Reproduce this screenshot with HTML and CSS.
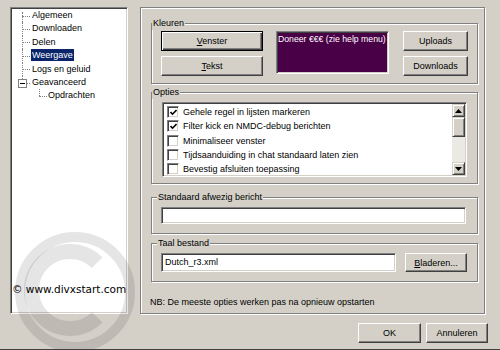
FILE: index.html
```html
<!DOCTYPE html>
<html>
<head>
    <title>Instellingen - Weergave</title>
    <link rel="stylesheet" href="styles.css">
</head>
<body>
<div class="dialog">
    <div class="main">
        <div class="tree">
            <ul>
                <li class="node first"><span class="lbl">Algemeen</span></li>
                <li class="node"><span class="lbl">Downloaden</span></li>
                <li class="node"><span class="lbl">Delen</span></li>
                <li class="node selected"><span class="lbl">Weergave</span></li>
                <li class="node"><span class="lbl">Logs en geluid</span></li>
                <li class="node parent"><span class="toggle"></span><span class="lbl">Geavanceerd</span></li>
                <li class="node child"><span class="lbl">Opdrachten</span></li>
            </ul>
        </div>

        <div class="page">
            <fieldset class="group kleuren">
                <legend>Kleuren</legend>
                <div class="body">
                    <div class="col col-a">
                        <button class="btn default"><u>V</u>enster</button>
                        <button class="btn"><u>T</u>ekst</button>
                    </div>
                    <div class="preview">Doneer €€€ (zie help menu)</div>
                    <div class="col col-b">
                        <button class="btn">Uploads</button>
                        <button class="btn">Downloads</button>
                    </div>
                </div>
            </fieldset>

            <fieldset class="group opties">
                <legend>Opties</legend>
                <div class="body">
                    <div class="list">
                        <ul class="items">
                            <li><span class="cb"><svg width="7" height="7" viewBox="0 0 7 7"><polyline points="0.5,3 2.5,5.2 6.5,1" fill="none" stroke="#000" stroke-width="1.6"/></svg></span>Gehele regel in lijsten markeren</li>
                            <li><span class="cb"><svg width="7" height="7" viewBox="0 0 7 7"><polyline points="0.5,3 2.5,5.2 6.5,1" fill="none" stroke="#000" stroke-width="1.6"/></svg></span>Filter kick en NMDC-debug berichten</li>
                            <li><span class="cb"></span>Minimaliseer venster</li>
                            <li><span class="cb"></span>Tijdsaanduiding in chat standaard laten zien</li>
                            <li><span class="cb"></span>Bevestig afsluiten toepassing</li>
                        </ul>
                        <div class="scrollbar">
                            <div class="sb-btn"><svg width="7" height="4" viewBox="0 0 7 4"><polygon points="3.5,0 7,4 0,4" fill="#000"/></svg></div>
                            <div class="sb-btn thumb"></div>
                            <div class="track"></div>
                            <div class="sb-btn"><svg width="7" height="4" viewBox="0 0 7 4"><polygon points="0,0 7,0 3.5,4" fill="#000"/></svg></div>
                        </div>
                    </div>
                </div>
            </fieldset>

            <fieldset class="group standaard">
                <legend>Standaard afwezig bericht</legend>
                <div class="body">
                    <div class="field wide"></div>
                </div>
            </fieldset>

            <fieldset class="group taal">
                <legend>Taal bestand</legend>
                <div class="body">
                    <div class="field file">Dutch_r3.xml</div>
                    <button class="btn browse"><u>B</u>laderen...</button>
                </div>
            </fieldset>

            <p class="note">NB: De meeste opties werken pas na opnieuw opstarten</p>
        </div>
    </div>

    <div class="footer">
        <button class="btn ok">OK</button>
        <button class="btn cancel">Annuleren</button>
    </div>

    <!-- watermark over the tree corner -->
    <svg class="watermark" width="122" height="122" viewBox="0 0 122 122">
        <circle cx="61" cy="61" r="55" fill="none" stroke="rgba(0,0,0,0.1)" stroke-width="10"/>
        <path d="M83.2 31.8 A38.5 38.5 0 1 0 83.2 86.2" fill="none" stroke="rgba(0,0,0,0.1)" stroke-width="15"/>
    </svg>
    <div class="wm-text">© www.divxstart.com</div>
</div>
</body>
</html>
```

FILE: styles.css
```css
body {
    margin: 0;
    background: #d4d0c8;
    color: #000;
    font: 9px "Liberation Sans", Arial, sans-serif;
}

.dialog {
    position: relative;
    width: 500px;
    height: 350px;
    box-sizing: border-box;
    padding: 7px 0 0 10px;
    border-bottom: 1px solid #404040;
    overflow: hidden;
}

.main {
    display: flex;
    gap: 12px;
}

/* tree on the left */
.tree {
    width: 118px;
    height: 307px;
    box-sizing: border-box;
    background: #fff;
    border: 1px solid;
    border-color: #808080 #fff #fff #808080;
    box-shadow: inset 1px 1px #404040, inset -1px -1px #d4d0c8;
}

.tree ul {
    list-style: none;
    margin: 0;
    padding: 1px 0 0 1px;
}

.node {
    position: relative;
    height: 13.4px;
    line-height: 13.4px;
    padding-left: 19px;
    white-space: nowrap;
}

.node::before {
    content: '';
    position: absolute;
    left: 10px;
    top: 50%;
    width: 8px;
    border-top: 1px dotted #808080;
}

.node::after {
    content: '';
    position: absolute;
    left: 10px;
    top: 0;
    bottom: 0;
    border-left: 1px dotted #808080;
}

.node.first::after {
    top: 3px;
}

.node.parent::after {
    bottom: 50%;
}

.node.parent::before {
    left: 15px;
    width: 3px;
}

.node.child {
    padding-left: 35px;
}

.node.child::before {
    left: 27px;
}

.node.child::after {
    left: 27px;
    bottom: 50%;
}

.lbl {
    display: inline-block;
    padding: 0 1px;
    line-height: 12px;
}

.node.selected .lbl {
    background: #0a246a;
    color: #fff;
}

.toggle {
    position: absolute;
    left: 6px;
    top: 50%;
    margin-top: -4px;
    width: 9px;
    height: 9px;
    box-sizing: border-box;
    border: 1px solid #808080;
    background: linear-gradient(#000, #000) center / 5px 1px no-repeat, #fff;
    z-index: 1;
}

/* property page */
.page {
    width: 345px;
    height: 307px;
    box-sizing: border-box;
    border: 1px solid #808080;
    box-shadow: inset 1px 1px #fff, 1px 1px #fff;
    padding: 8.5px 6px 0 10px;
}

.group {
    margin: 0;
    padding: 0;
    min-width: 0;
    border: 1px solid #808080;
    box-shadow: inset 1px 1px #fff, 1px 1px #fff;
}

.group legend {
    padding: 0 1px;
    line-height: 13px;
    background: #d4d0c8;
}

.standaard legend,
.taal legend {
    margin-left: 5px;
}

.opties {
    margin-top: 1.5px;
}

.standaard {
    margin-top: 6.5px;
}

.taal {
    margin-top: 2.5px;
}

.kleuren .body {
    display: flex;
    gap: 13px;
    padding: 1.5px 9px 7px 9px;
}

.col {
    display: flex;
    flex-direction: column;
    gap: 5px;
}

.col-a {
    width: 102px;
}

.col-b {
    width: 65px;
}

.preview {
    width: 113px;
    height: 43px;
    margin-right: 1px;
    box-sizing: border-box;
    padding: 2px 1px;
    font-size: 8.7px;
    background: #4a0046;
    color: #fff;
    white-space: nowrap;
    overflow: hidden;
    border: 1px solid;
    border-color: #808080 #fff #fff #808080;
    box-shadow: inset 1px 1px #404040, inset -1px -1px #d4d0c8;
}

.btn {
    height: 20px;
    box-sizing: border-box;
    padding: 0;
    font: 9px "Liberation Sans", Arial, sans-serif;
    color: #000;
    background: #d4d0c8;
    border: 1px solid;
    border-color: #fff #404040 #404040 #fff;
    box-shadow: inset -1px -1px #808080;
}

.btn.default {
    border: 1px solid #000;
    box-shadow: inset 1px 1px #fff, inset -1px -1px #404040, inset -2px -2px #808080;
}

/* checkbox list */
.opties .body {
    padding: 3.5px 10px 6px 10px;
}

.list {
    display: flex;
    width: 305px;
    height: 75px;
    box-sizing: border-box;
    padding: 1px;
    background: #fff;
    border: 1px solid;
    border-color: #808080 #fff #fff #808080;
    box-shadow: inset 1px 1px #404040, inset -1px -1px #d4d0c8;
}

.items {
    flex: 1;
    list-style: none;
    margin: 0;
    padding: 1px 0 0 0;
    overflow: hidden;
}

.items li {
    display: flex;
    align-items: center;
    height: 14.25px;
    padding-left: 3px;
    white-space: nowrap;
}

.cb {
    flex: none;
    display: flex;
    align-items: center;
    justify-content: center;
    width: 12px;
    height: 12px;
    box-sizing: border-box;
    margin-right: 4px;
    background: #fff;
    border: 1px solid;
    border-color: #808080 #fff #fff #808080;
    box-shadow: inset 1px 1px #404040, inset -1px -1px #d4d0c8;
}

.scrollbar {
    display: flex;
    flex-direction: column;
    width: 13px;
}

.sb-btn {
    display: flex;
    align-items: center;
    justify-content: center;
    height: 13px;
    box-sizing: border-box;
    background: #d4d0c8;
    border: 1px solid;
    border-color: #d4d0c8 #404040 #404040 #d4d0c8;
    box-shadow: inset 1px 1px #fff, inset -1px -1px #808080;
}

.sb-btn.thumb {
    height: 20px;
}

.track {
    flex: 1;
    background: #ebe9e4;
}

/* text fields */
.field {
    box-sizing: border-box;
    padding: 2px 3px;
    background: #fff;
    white-space: nowrap;
    border: 1px solid;
    border-color: #808080 #fff #fff #808080;
    box-shadow: inset 1px 1px #404040, inset -1px -1px #d4d0c8;
}

.standaard .body {
    padding: 3.5px 11px 9px 9px;
}

.field.wide {
    width: 305px;
    height: 17px;
}

.taal .body {
    display: flex;
    gap: 9px;
    padding: 3.5px 10px 9px 9px;
}

.field.file {
    width: 235px;
    height: 19px;
    line-height: 13px;
}

.btn.browse {
    width: 62px;
    height: 19px;
}

.note {
    margin: 13.5px 0 0 -1px;
    line-height: 13px;
}

/* bottom buttons */
.footer {
    display: flex;
    justify-content: flex-end;
    gap: 5px;
    margin-top: 9px;
    padding-right: 12px;
}

.btn.ok {
    width: 63px;
}

.btn.cancel {
    width: 62px;
}

/* watermark */
.watermark {
    position: absolute;
    left: 14px;
    top: 231px;
    pointer-events: none;
}

.wm-text {
    position: absolute;
    left: 12px;
    top: 283px;
    font: 10.5px "DejaVu Sans", Verdana, sans-serif;
    line-height: 13px;
    white-space: nowrap;
}
```
